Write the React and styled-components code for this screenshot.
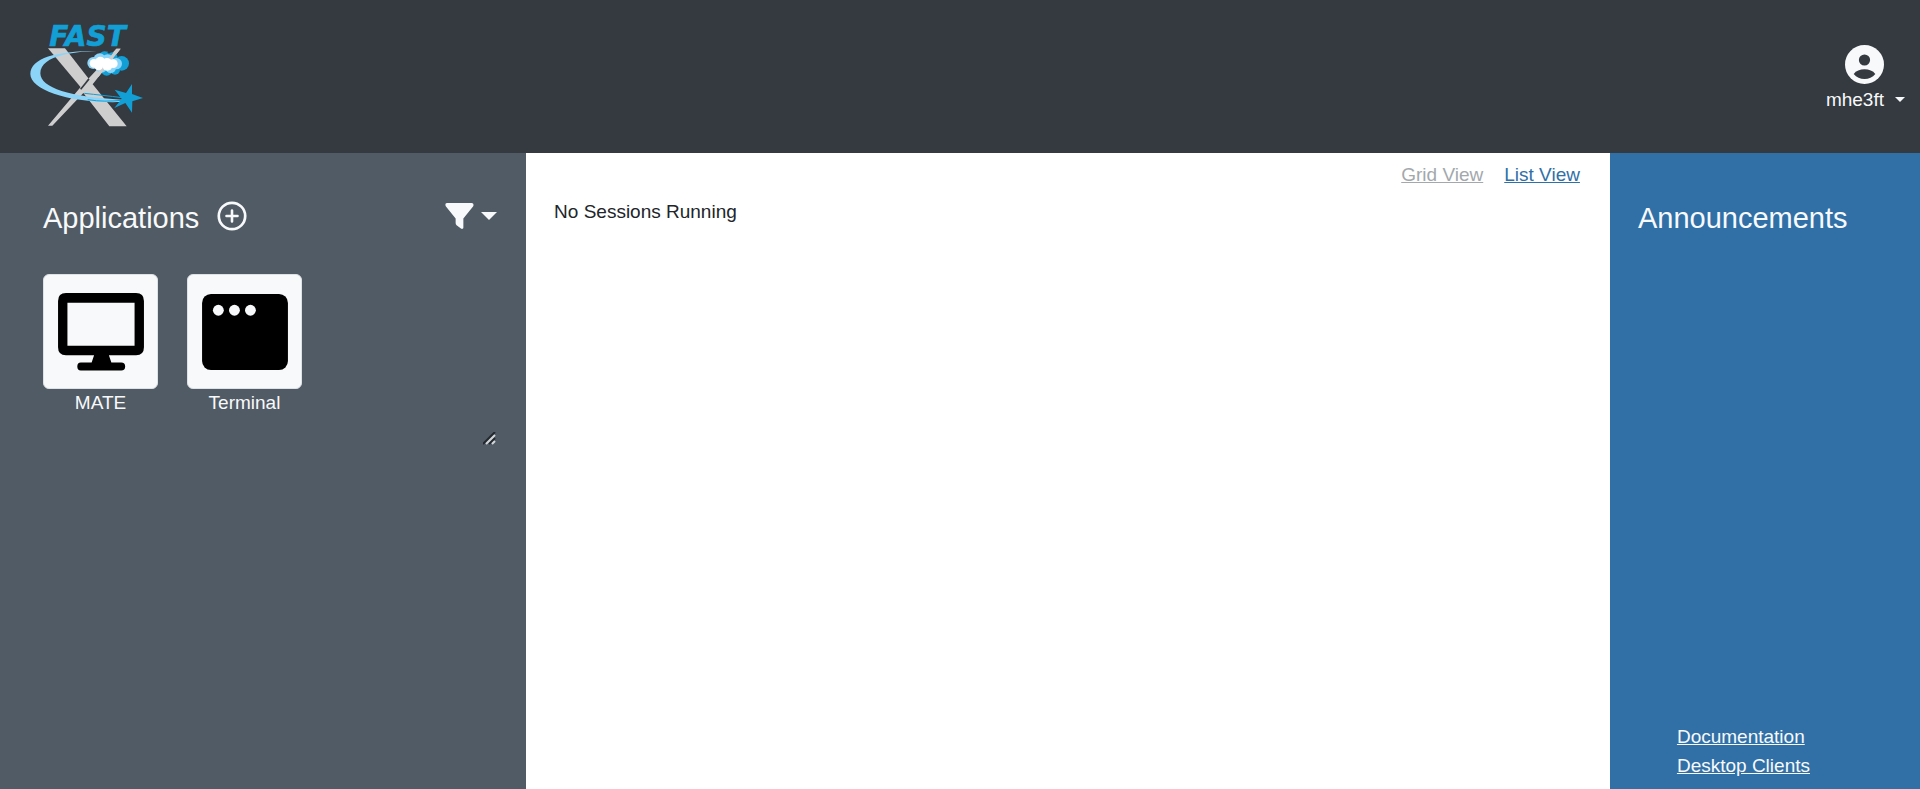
import React from 'react';
import styled, { createGlobalStyle } from 'styled-components';

const GlobalStyle = createGlobalStyle`
  *, *::before, *::after { box-sizing: border-box; }
  body {
    margin: 0;
    background: #fff;
    color: #212529;
    font-family: "Liberation Sans", Arial, sans-serif;
    font-size: 19px;
    line-height: 29px;
  }
`;

const Page = styled.div`
  display: flex;
  flex-direction: column;
  min-height: 100vh;
`;

const Header = styled.header`
  display: flex;
  justify-content: space-between;
  align-items: flex-start;
  padding: 18px 15px 24px 29px;
  background: #343a40;
`;

const HomeLink = styled.a`
  display: block;
  svg { display: block; }
`;

const IconButton = styled.button`
  display: flex;
  align-items: center;
  gap: ${(p) => p.$gap || 0}px;
  min-height: 30px;
  padding: 0;
  border: 0;
  background: none;
  color: #f8f9fa;
  font: inherit;
  cursor: pointer;
  svg { display: block; }
`;

const UserButton = styled(IconButton)`
  align-items: flex-end;
  padding-top: 27px;
`;

const UserStack = styled.span`
  display: flex;
  flex-direction: column;
  align-items: flex-end;
  gap: 1px;
`;

const Caret = styled.span`
  border-top: ${(p) => p.$size}px solid currentColor;
  border-left: ${(p) => p.$size}px solid transparent;
  border-right: ${(p) => p.$size}px solid transparent;
`;

const UserCaret = styled(Caret)`
  margin-bottom: 12px;
`;

const Columns = styled.div`
  flex: 1;
  display: grid;
  grid-template-columns: 27.4% 1fr 16.15%;
`;

const Sidebar = styled.aside`
  padding: 48px 29px 24px 43px;
  background: #515b65;
  color: #f8f9fa;
`;

const PanelTitle = styled.h2`
  margin: 0;
  font-size: 29px;
  font-weight: 400;
  line-height: 35px;
`;

const SidebarHead = styled.div`
  display: flex;
  align-items: flex-start;
  gap: 18px;
`;

const FilterButton = styled(IconButton)`
  margin-left: auto;
`;

const AppList = styled.div`
  display: flex;
  flex-wrap: wrap;
  gap: 29px;
  padding-top: 38px;
`;

const AppItem = styled.button`
  display: flex;
  flex-direction: column;
  align-items: center;
  width: 115px;
  padding: 0;
  border: 0;
  background: none;
  color: #f8f9fa;
  font: inherit;
  line-height: 27px;
  cursor: pointer;
`;

const Tile = styled.span`
  display: flex;
  align-items: center;
  justify-content: center;
  width: 115px;
  height: 115px;
  border: 1px solid #dee2e6;
  border-radius: 6px;
  background: #f8f9fa;
  color: #000;
`;

const ResizeRow = styled.div`
  display: flex;
  justify-content: flex-end;
  padding-top: 16px;
  svg { display: block; }
`;

const Sessions = styled.main`
  padding: 7px 30px 7px 28px;
  background: #fff;
`;

const ViewSwitch = styled.nav`
  display: flex;
  justify-content: flex-end;
  gap: 21px;
`;

const TextLink = styled.a`
  color: ${(p) => p.$color};
  text-decoration: underline;
`;

const EmptyNote = styled.p`
  margin: 8px 0 0;
`;

const Announcements = styled.aside`
  display: flex;
  flex-direction: column;
  justify-content: space-between;
  padding: 48px 28px 9px;
  background: #3070a7;
  color: #f8f9fa;
`;

const HelpLinks = styled.nav`
  display: flex;
  flex-direction: column;
  align-items: flex-start;
  padding-left: 39px;
`;

const Logo = () => (
  <svg width="118" height="111" viewBox="29 22 354 333" role="img" aria-label="FastX">
    <text x="90" y="105" fill="#119fd6" stroke="#119fd6" strokeWidth="2" fontSize="84" fontWeight="700" fontStyle="italic"
      fontFamily='"DejaVu Sans", sans-serif'>FAST</text>
    <path d="M86 113H137L207 203 186 232Z" fill="#cecece" />
    <path d="M291 114H304L220 221 322 347H270L192 247 99 345H86L184 229Z" fill="#cecece" />
    <path d="M209 205 184 236" stroke="#343a40" strokeWidth="5" />
    <path d="M276 122C210 119 64 124 63 188C64 232 151 259 309 267L306 274C153 279 33 238 33 190C34 137 129 116 276 122Z" fill="#8dd5f8" />
    <path d="M195 248C230 252 270 256 309 261M205 267C242 273 272 272 306 269" fill="none" stroke="#119fd6" strokeWidth="3" />
    <path d="M286 237 320 247 338 220V250L371 262 339 272 338 306 318 277 285 292 307 264Z" fill="#119fd6" />
    <g fill="#119fd6">
      <circle cx="255" cy="139" r="17" /><circle cx="279" cy="141" r="16" /><circle cx="307" cy="158" r="22" />
      <circle cx="262" cy="178" r="17" /><circle cx="287" cy="177" r="15" />
    </g>
    <g fill="#8dd5f8">
      <circle cx="222" cy="157" r="18" /><circle cx="241" cy="147" r="19" /><circle cx="265" cy="149" r="18" />
      <circle cx="291" cy="159" r="17" /><circle cx="246" cy="168" r="18" /><circle cx="274" cy="171" r="16" />
    </g>
    <path d="M291 114H304L277 148H265ZM246 172H258L238 198H226Z" fill="#cecece" />
    <g fill="#fff">
      <circle cx="224" cy="158" r="13" /><circle cx="243" cy="153" r="15" /><circle cx="263" cy="156" r="14" />
      <circle cx="282" cy="159" r="13" /><circle cx="238" cy="166" r="13" /><circle cx="264" cy="165" r="15" />
    </g>
  </svg>
);

const UserIcon = () => (
  <svg width="39" height="39" viewBox="0 0 39 39" aria-hidden="true">
    <circle cx="19.5" cy="19.5" r="19.5" fill="#f8f9fa" />
    <circle cx="19.5" cy="15" r="5.6" fill="#343a40" />
    <path d="M8.7 29C11 25.8 15 24.3 19.5 24.3S28 25.8 30.3 29C27.5 32.4 23.8 34 19.5 34S11.500 32.400 8.700 29Z" fill="#343a40" />
  </svg>
);

const PlusIcon = () => (
  <svg width="30" height="30" viewBox="0 0 30 30" fill="none" stroke="#f8f9fa" aria-hidden="true">
    <circle cx="15" cy="15" r="13.2" strokeWidth="2.7" />
    <path d="M15 9.500V20.500M9.500 15H20.500" strokeWidth="2.6" strokeLinecap="round" />
  </svg>
);

const FilterIcon = () => (
  <svg width="29" height="26" viewBox="0 0 30 26" preserveAspectRatio="none" fill="#f8f9fa" aria-hidden="true">
    <path d="M2 0H27.500C29.500 0 30 2 29 3.500L19 15.500V24.500C19 26 17.500 26.300 16.500 25.600L12 22.300C11.300 21.800 11 21 11 20V15.500L1 3.500C0 2 .3 0 2 0Z" />
  </svg>
);

const DesktopIcon = () => (
  <svg width="86" height="78" viewBox="0 0 87 79" aria-hidden="true">
    <path fillRule="evenodd" d="M8 0H79Q87 0 87 8V55Q87 63 79 63H51.500L54 70.500H64Q68 70.500 68 74.500T64 78.500H23Q19.500 78.500 19.500 74.500T23 70.500H34L36.500 63H8Q0 63 0 55V8Q0 0 8 0ZM9.500 10V53.500H77.500V10Z" />
  </svg>
);

const WindowIcon = () => (
  <svg width="86" height="76" viewBox="0 0 87 77" aria-hidden="true">
    <rect width="87" height="77" rx="9" />
    <g fill="#f8f9fa">
      <circle cx="16.500" cy="16.500" r="5.500" />
      <circle cx="32.800" cy="16.500" r="5.500" />
      <circle cx="49" cy="16.500" r="5.500" />
    </g>
  </svg>
);

const ResizeGrip = () => (
  <svg width="14" height="13" viewBox="0 0 14 13" fill="none" aria-hidden="true">
    <path d="M0 12 12 0M6 12 12 6" stroke="#23282d" strokeWidth="2" />
    <path d="M3 12 12 3M9 12 12 9" stroke="#d3d6d9" strokeWidth="2" />
  </svg>
);

const apps = [
  { name: 'MATE', Icon: DesktopIcon },
  { name: 'Terminal', Icon: WindowIcon },
];

export default function App() {
  return (
    <Page>
      <GlobalStyle />
      <Header>
        <HomeLink href="#" aria-label="FastX home"><Logo /></HomeLink>
        <UserButton type="button" aria-haspopup="menu" $gap={11}>
          <UserStack>
            <UserIcon />
            <span>mhe3ft</span>
          </UserStack>
          <UserCaret $size={5} />
        </UserButton>
      </Header>
      <Columns>
        <Sidebar>
          <SidebarHead>
            <PanelTitle>Applications</PanelTitle>
            <IconButton type="button" aria-label="Add application"><PlusIcon /></IconButton>
            <FilterButton type="button" aria-label="Filter applications" $gap={7}>
              <FilterIcon />
              <Caret $size={8} />
            </FilterButton>
          </SidebarHead>
          <AppList>
            {apps.map(({ name, Icon }) => (
              <AppItem key={name} type="button">
                <Tile><Icon /></Tile>
                {name}
              </AppItem>
            ))}
          </AppList>
          <ResizeRow><ResizeGrip /></ResizeRow>
        </Sidebar>
        <Sessions>
          <ViewSwitch aria-label="Session view">
            <TextLink href="#grid" $color="#a3a8ac" aria-current="true">Grid View</TextLink>
            <TextLink href="#list" $color="#3070a7">List View</TextLink>
          </ViewSwitch>
          <EmptyNote>No Sessions Running</EmptyNote>
        </Sessions>
        <Announcements>
          <PanelTitle>Announcements</PanelTitle>
          <HelpLinks aria-label="Help">
            <TextLink href="#docs" $color="#f8f9fa">Documentation</TextLink>
            <TextLink href="#clients" $color="#f8f9fa">Desktop Clients</TextLink>
          </HelpLinks>
        </Announcements>
      </Columns>
    </Page>
  );
}
